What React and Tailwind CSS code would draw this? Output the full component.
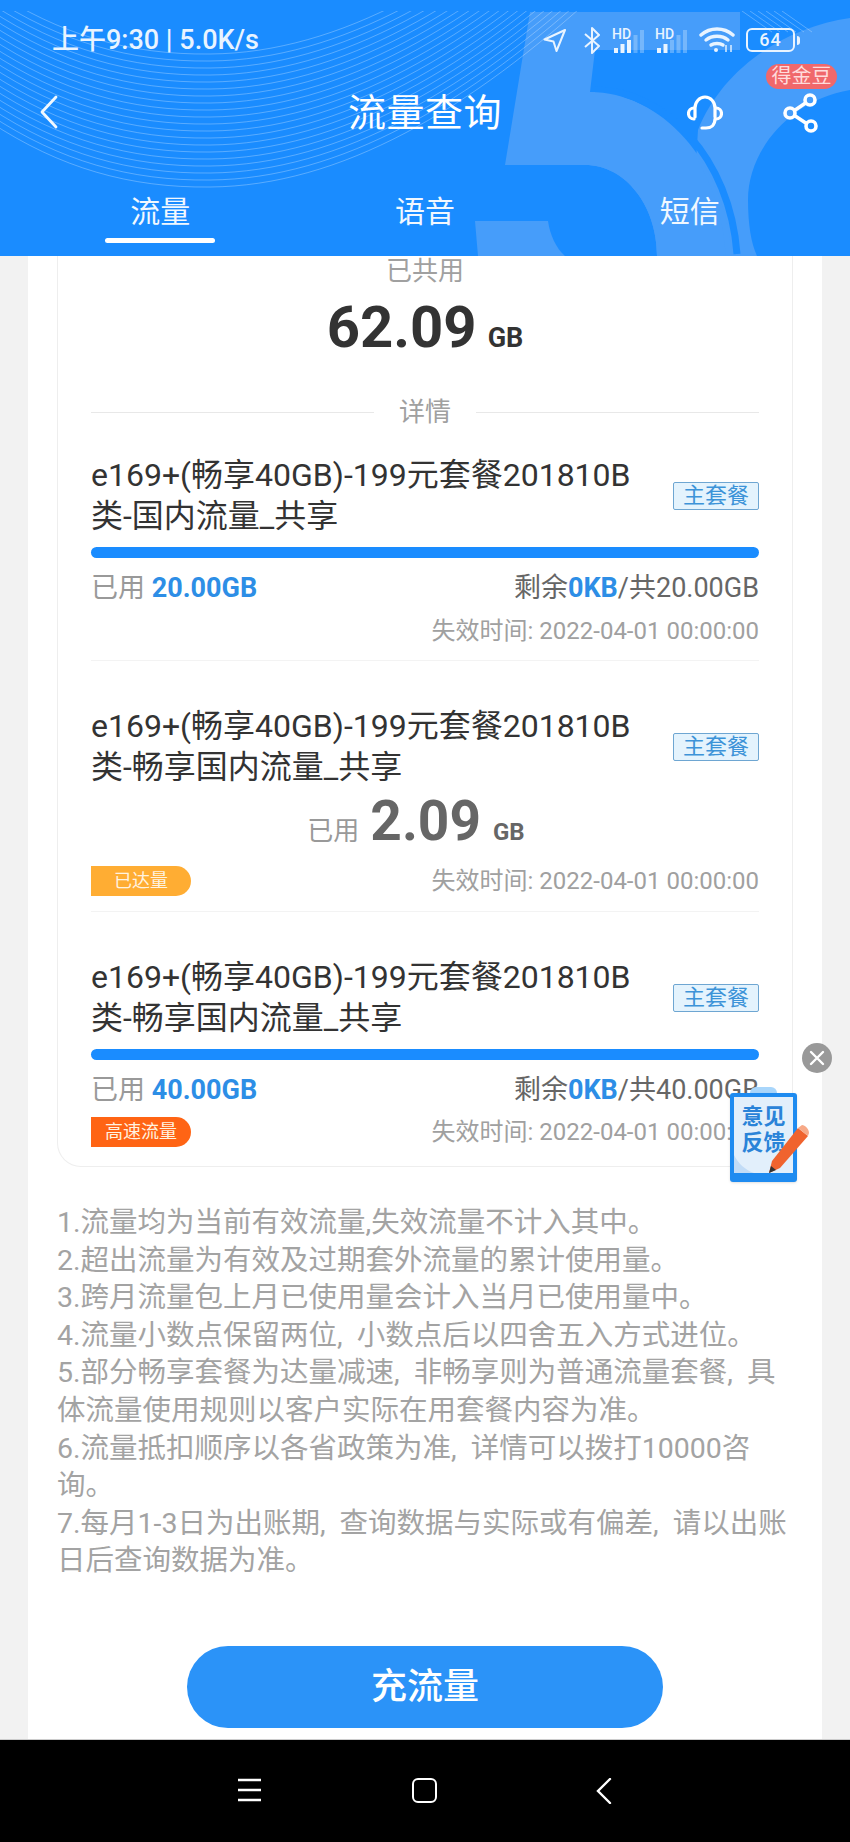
import React from "react";

const notes = [
  "1.流量均为当前有效流量,失效流量不计入其中。",
  "2.超出流量为有效及过期套外流量的累计使用量。",
  "3.跨月流量包上月已使用量会计入当月已使用量中。",
  "4.流量小数点保留两位, 小数点后以四舍五入方式进位。",
  "5.部分畅享套餐为达量减速, 非畅享则为普通流量套餐, 具",
  "体流量使用规则以客户实际在用套餐内容为准。",
  "6.流量抵扣顺序以各省政策为准, 详情可以拨打10000咨",
  "询。",
  "7.每月1-3日为出账期, 查询数据与实际或有偏差, 请以出账",
  "日后查询数据为准。",
];

const HeaderArt = () => (
  <svg className="absolute inset-0" width="850" height="256" viewBox="0 0 850 256" fill="none">
    <defs>
      <clipPath id="arcClip">
        <rect x="0" y="11" width="850" height="245" />
      </clipPath>
    </defs>
    <path d="M850 18C782 28 722 70 698 130L690 256H757C751 243 748 224 748 200C748 150 790 100 850 90Z" fill="#469dfa" />
    <path d="M530 12H740V50H595L590 92C660 92 725 160 732 256H657C657 205 625 165 585 165H505Z" fill="#469dfa" />
    <path d="M590 92C660 92 725 160 732 256" stroke="#1a8cff" strokeWidth="7" transform="translate(5 -2)" />
    <path d="M590 92C660 92 720 160 726 256H657C657 205 625 165 585 165V92Z" fill="#469dfa" />
    <path d="M475 221H548C550 235 556 248 565 256H478Z" fill="#469dfa" />
    <g clipPath="url(#arcClip)" stroke="#ffffff" strokeOpacity="0.28" strokeWidth="1">
      {Array.from({ length: 20 }).map((_, i) => (
        <path key={i} d={`M-10 ${122 - i * 7}C60 ${168 - i * 7} 130 ${188 - i * 7} 210 ${187 - i * 7}C340 ${186 - i * 7} 470 ${110 - i * 7} 600 ${-10 - i * 7}`} />
      ))}
      {Array.from({ length: 6 }).map((_, i) => (
        <path key={i} d={`M${742 + i * 8} 11L${772 + i * 8} 32`} />
      ))}
    </g>
  </svg>
);

const Signal = ({ filled }) => (
  <div className="relative w-[34px] h-[25px]">
    <span className="absolute left-0 top-[-1px] text-[14px] leading-none font-medium text-[#e9f4ff]">HD</span>
    <svg className="absolute left-0 bottom-0" width="34" height="25" viewBox="0 0 34 25">
      {[5, 9, 13, 18, 23].map((h, i) => (
        <rect key={i} x={2 + i * 6.5} y={25 - h} width="4" height={h} fill="#e9f4ff" fillOpacity={i < filled ? 1 : 0.3} />
      ))}
    </svg>
  </div>
);

const StatusBar = () => (
  <div className="relative h-[80px] flex items-center justify-between pl-[52px] pr-[50px] text-[#e9f4ff]">
    <div className="text-[27px] font-medium leading-none">上午9:30 | 5.0K/s</div>
    <div className="flex items-center">
      <svg width="24" height="24" viewBox="0 0 24 24" fill="none" stroke="#e9f4ff" strokeWidth="2" strokeLinejoin="round">
        <path d="M22 2 1.5 11.5l9 2 3 9.5Z" />
      </svg>
      <svg className="ml-[16px]" width="18" height="27" viewBox="0 0 18 27" fill="none" stroke="#e9f4ff" strokeWidth="2" strokeLinejoin="round">
        <path d="m2 7 14 12-7 7V1l7 7L2 20" />
      </svg>
      <div className="ml-[11px]"><Signal filled={3} /></div>
      <div className="ml-[9px]"><Signal filled={2} /></div>
      <svg className="ml-[10px]" width="36" height="26" viewBox="0 0 36 26" fill="none" stroke="#e9f4ff" strokeWidth="3.4" strokeLinecap="round">
        <path d="M2 8c9-8 23-8 32 0" />
        <path d="M7 13c6-5 16-5 22 0" />
        <path d="M12 18c3-2 9-2 12 0" />
        <circle cx="17" cy="23" r="2" fill="#e9f4ff" stroke="none" />
        <path d="M27 18v7M32 18v7" strokeWidth="1.4" strokeLinecap="butt" />
      </svg>
      <div className="ml-[11px] flex items-center">
        <div className="w-[49px] h-[24px] rounded-[6px] border-[2.5px] border-[#e9f4ff] flex items-center justify-center text-[18px] font-medium leading-none tracking-[1px]">
          64
        </div>
        <div className="ml-[2px] w-[3px] h-[9px] rounded-r-sm bg-[#e9f4ff]" />
      </div>
    </div>
  </div>
);

const TitleBar = () => (
  <div className="relative h-[66px] flex items-center justify-center text-white">
    <svg className="absolute left-[39px] top-[15px]" width="20" height="34" viewBox="0 0 20 34" fill="none" stroke="#f1f8ff" strokeWidth="2.8" strokeLinecap="round" strokeLinejoin="round">
      <path d="M17 2 3 17l14 15" />
    </svg>
    <div className="text-[38px] font-normal leading-none tracking-[0.5px]">流量查询</div>
    <svg className="absolute left-[687px] top-[15px]" width="36" height="36" viewBox="0 0 36 36" fill="none" stroke="#ffffff" strokeWidth="3.2" strokeLinecap="round">
      <path d="M8 22V13a10 11 0 0 1 20 0v9" />
      <path d="M7 13a5.5 5.5 0 0 0 0 11" />
      <path d="M29 13a5.5 5.5 0 0 1 0 11" />
      <path d="M28 24c0 6-4 9-9 9h-4" />
    </svg>
    <svg className="absolute left-[783px] top-[13px]" width="36" height="40" viewBox="0 0 36 40" fill="none" stroke="#ffffff" strokeWidth="3.6">
      <circle cx="27" cy="7" r="5" />
      <circle cx="7" cy="20" r="5" />
      <circle cx="28" cy="33" r="5" />
      <path d="M22.5 10 11.5 17.5M11.5 22.5l12 8" />
    </svg>
    <div className="absolute left-[766px] top-[-16px] w-[71px] h-[25px] rounded-full bg-[#f0686b] text-[#ffdcdc] text-[20px] leading-[25px] text-center">
      得金豆
    </div>
  </div>
);

const Tab = ({ label, active }) => (
  <div className="flex flex-col items-center">
    <div className="text-[30px] leading-[40px] text-[#f1f8ff]">{label}</div>
    {active && <div className="mt-[6px] w-[110px] h-[5px] rounded-full bg-white" />}
  </div>
);

const PlanTitle = ({ name }) => (
  <div className="flex items-center justify-between">
    <div className="w-[560px] text-[32px] leading-[41px] text-[#333333] whitespace-nowrap">
      e169+(畅享40GB)-199元套餐201810B
      <br />
      {name}
    </div>
    <div className="w-[86px] h-[28px] rounded-[2px] border border-[#6ea6d2] bg-[#e4f3fd] text-[#3d93d8] text-[22px] leading-[26px] text-center">
      主套餐
    </div>
  </div>
);

const Bar = () => <div className="mt-[10px] h-[11px] rounded-full bg-[#1a8cff]" />;

const UsedRow = ({ used, total }) => (
  <div className="mt-[15px] h-[30px] flex items-center justify-between leading-[30px]">
    <div className="text-[27px] text-[#999999]">
      已用 <span className="font-bold text-[#2d8ee6]">{used}</span>
    </div>
    <div className="text-[27px] text-[#666666]">
      剩余<span className="font-bold text-[#2d8ee6]">0KB</span>/共{total}
    </div>
  </div>
);

const Expire = () => (
  <div className="text-[24px] leading-[28px] text-[#a0a0a0]">失效时间: 2022-04-01 00:00:00</div>
);

const Chip = ({ label, color }) => (
  <div className={`w-[100px] h-[30px] rounded-r-full ${color} text-[#fff3e0] text-[18px] leading-[30px] text-center`}>
    {label}
  </div>
);

const FeedbackFloat = () => (
  <>
    <div className="absolute left-[802px] top-[1043px] w-[30px] h-[30px] rounded-full bg-[#999999] flex items-center justify-center">
      <svg width="18" height="18" viewBox="0 0 18 18" stroke="#ffffff" strokeWidth="2.4" strokeLinecap="round">
        <path d="m3 3 12 12M15 3 3 15" />
      </svg>
    </div>
    <div className="absolute left-[730px] top-[1087px] w-[81px] h-[96px]">
      <div className="absolute left-[20px] top-0 w-[27px] h-[10px] rounded-t-md bg-[#a9d6fb]" />
      <div className="absolute left-0 top-[6px] w-[67px] h-[89px] rounded-[3px] bg-[#1e8bf0] px-[4px] pt-[4px] shadow-sm">
        <div className="relative w-full h-[76px] overflow-hidden bg-[#e2effb] flex flex-col items-center pt-[7px] text-[#2a83d8] text-[22px] leading-[26px] font-bold">
          <span className="whitespace-nowrap">意见</span>
          <span className="whitespace-nowrap">反馈</span>
          <svg className="absolute left-0 bottom-0" width="20" height="18" viewBox="0 0 20 18">
            <path d="M0 0C4 8 11 15 20 18H0Z" fill="#c2dcf6" />
          </svg>
        </div>
      </div>
      <svg className="absolute left-[38px] top-[38px]" width="44" height="52" viewBox="0 0 44 52">
        <path d="M30 3 40 11 12 43 1 48 4 36Z" fill="#f0632e" />
        <path d="M30 3 34 0c3 0 7 4 7 8l-1 3Z" fill="#f7a987" />
        <path d="M1 48 3 41l5 4Z" fill="#333333" />
      </svg>
    </div>
  </>
);

const NavBar = () => (
  <div className="h-[103px] bg-black border-t border-[#cccccc] pt-[38px]">
    <div className="relative h-[26px]">
      <svg className="absolute left-[238px] top-0" width="23" height="24" viewBox="0 0 23 24" stroke="#ffffff" strokeWidth="2.6">
        <path d="M0 2h23M0 12h23M0 22h23" />
      </svg>
      <div className="absolute left-[412px] top-0 w-[25px] h-[25px] rounded-[6px] border-[2.5px] border-white" />
      <svg className="absolute left-[595px] top-0" width="18" height="26" viewBox="0 0 18 26" fill="none" stroke="#ffffff" strokeWidth="2.4" strokeLinecap="round">
        <path d="M15 1 3 13l12 12" />
      </svg>
    </div>
  </div>
);

export default function App() {
  return (
    <div className="relative w-[850px] h-[1842px] overflow-hidden bg-[#f2f2f2] font-['Roboto','Noto_Sans_CJK_SC',sans-serif]">
      <div className="relative h-[256px] bg-[#1a8cff] overflow-hidden">
        <HeaderArt />
        <StatusBar />
      </div>
      <div className="absolute left-0 top-0 w-full">
        <div className="h-[80px]" />
        <TitleBar />
        <div className="relative mt-[46px] grid grid-cols-3 px-[28px]">
          <Tab label="流量" active />
          <Tab label="语音" />
          <Tab label="短信" />
        </div>
      </div>

      <div className="mx-[28px] h-[1483px] bg-white overflow-hidden">
        <div className="mx-[29px] border-x border-b border-[#eeeeee] rounded-b-[24px] px-[33px] pb-[19px]">
          <div className="text-center text-[26px] leading-[30px] text-[#a0a0a0]">已共用</div>
          <div className="mt-[11px] h-[60px] flex items-baseline justify-center text-[#333333] font-bold">
            <span className="text-[58px] leading-[60px]">62.09</span>
            <span className="ml-[11px] text-[27px] leading-none">GB</span>
          </div>
          <div className="mt-[40px] h-[30px] flex items-center gap-[25px]">
            <div className="flex-1 h-px bg-[#e8e8e8]" />
            <div className="text-[26px] leading-[30px] text-[#a0a0a0]">详情</div>
            <div className="flex-1 h-px bg-[#e8e8e8]" />
          </div>

          <div className="pt-[28px] pb-[15px] border-b border-[#f3f3f3]">
            <PlanTitle name="类-国内流量_共享" />
            <Bar />
            <UsedRow used="20.00GB" total="20.00GB" />
            <div className="mt-[14px] flex justify-end">
              <Expire />
            </div>
          </div>

          <div className="pt-[45px] pb-[15px] border-b border-[#f3f3f3]">
            <PlanTitle name="类-畅享国内流量_共享" />
            <div className="mt-[8px] h-[50px] pr-[18px] flex items-baseline justify-center text-[#666666] font-bold">
              <span className="text-[26px] leading-none font-normal text-[#999999]">已用</span>
              <span className="ml-[11px] text-[55px] leading-[50px]">2.09</span>
              <span className="ml-[12px] text-[24px] leading-none">GB</span>
            </div>
            <div className="mt-[20px] flex items-center justify-between">
              <Chip label="已达量" color="bg-[#ffad33]" />
              <Expire />
            </div>
          </div>

          <div className="pt-[45px]">
            <PlanTitle name="类-畅享国内流量_共享" />
            <Bar />
            <UsedRow used="40.00GB" total="40.00GB" />
            <div className="mt-[12px] flex items-center justify-between">
              <Chip label="高速流量" color="bg-[#ff6414]" />
              <Expire />
            </div>
          </div>
        </div>

        <div className="mt-[37px] pl-[29px] text-[28.5px] leading-[37.6px] [word-spacing:7px] text-[#a3a3a3] whitespace-nowrap">
          {notes.map((line) => (
            <div key={line}>{line}</div>
          ))}
        </div>

        <div className="mt-[66px] mx-auto w-[476px] h-[82px] rounded-full bg-[#2b93f8] text-white text-[36px] font-medium leading-[82px] text-center">
          充流量
        </div>
      </div>

      <NavBar />
      <FeedbackFloat />
    </div>
  );
}
